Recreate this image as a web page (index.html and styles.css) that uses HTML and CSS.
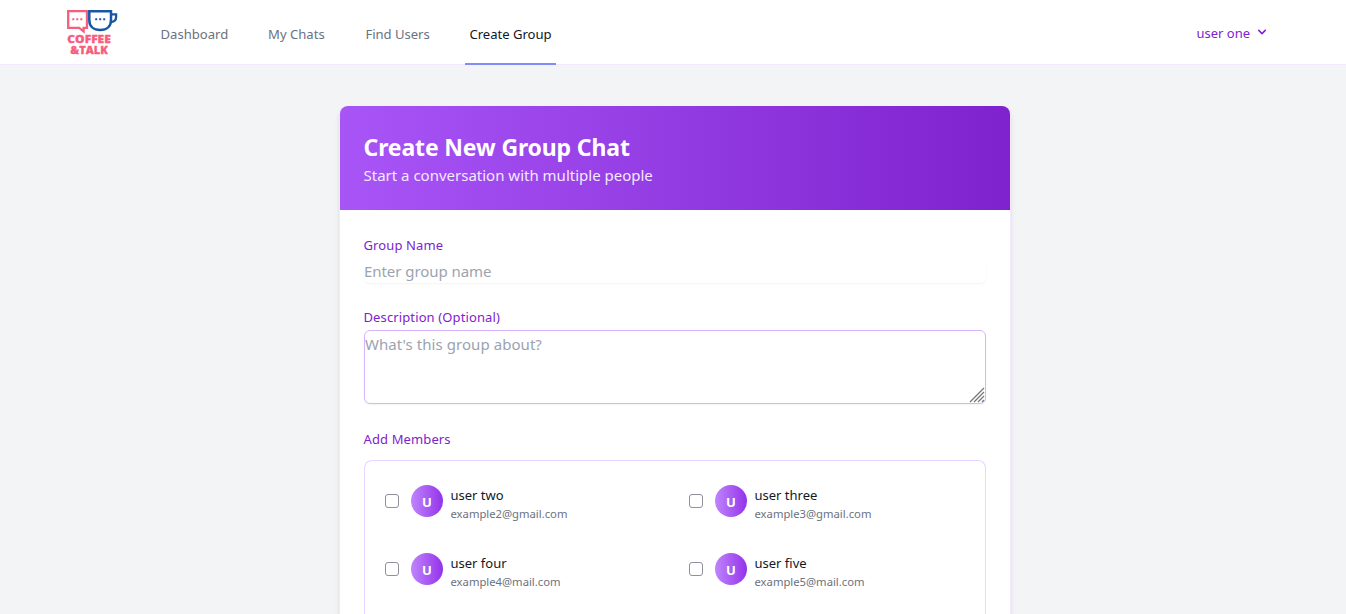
FILE: index.html
```
<!DOCTYPE html>
<html lang="en">
<head>
<meta charset="utf-8">
<title>Create Group</title>
<link rel="stylesheet" href="styles.css">
</head>
<body>
<nav class="nav">
  <a class="logo" href="#">
    <svg width="54" height="48" viewBox="0 0 54 48" fill="none">
      <path d="M3.2 4.2H22V20.8H18.6V24.3L14.2 20.8H3.2Z" stroke="#f75d7e" stroke-width="2.3"/>
      <path d="M7.3 12.2h2M11.3 12.2h2M15.3 12.2h2" stroke="#f75d7e" stroke-width="2"/>
      <path d="M24.3 4.2H46V13C46 19.5 41.8 23 35.2 23S24.3 19.5 24.3 13Z" stroke="#1757a6" stroke-width="2.5"/>
      <path d="M46 7.3H51.1V10C51.1 13 49 15 45.2 15.2" stroke="#1757a6" stroke-width="2.3"/>
      <path d="M30.2 12.2h2M34.2 12.2h2M38.2 12.2h2" stroke="#1757a6" stroke-width="2"/>
      <g class="logo-text" fill="#f75d7e">
        <text x="2.3" y="36.2" textLength="43.5" lengthAdjust="spacingAndGlyphs">COFFEE</text>
        <text x="5.3" y="47" textLength="37.5" lengthAdjust="spacingAndGlyphs">&amp;TALK</text>
      </g>
    </svg>
  </a>
  <div class="links">
    <a class="link link-dashboard" href="#">Dashboard</a>
    <a class="link link-chats" href="#">My Chats</a>
    <a class="link link-find" href="#">Find Users</a>
    <a class="link link-create active" href="#">Create Group</a>
  </div>
  <button class="account" type="button"><span class="account-name">user one</span>
    <svg width="16" height="16" viewBox="0 0 20 20" fill="#7e22ce"><path d="M5.293 7.293a1 1 0 011.414 0L10 10.586l3.293-3.293a1 1 0 111.414 1.414l-4 4a1 1 0 01-1.414 0l-4-4a1 1 0 010-1.414z"/></svg>
  </button>
</nav>
<main class="card">
  <header class="card-head">
    <h1 class="title">Create New Group Chat</h1>
    <p class="subtitle">Start a conversation with multiple people</p>
  </header>
  <form class="form">
    <label class="label label-name" for="name">Group Name</label>
    <input class="input" id="name" type="text" placeholder="Enter group name">
    <label class="label label-desc" for="desc">Description (Optional)</label>
    <div class="area-wrap">
      <textarea class="textarea" id="desc" placeholder="What's this group about?"></textarea>
      <svg class="grip" width="16" height="16" viewBox="0 0 16 16" stroke="#777" stroke-width="1.3"><path d="M1 15L15 1M5 15L15 5M9 15L15 9M13 15L15 13"/></svg>
    </div>
    <div class="label label-members">Add Members</div>
    <div class="members">
      <label class="member"><input class="check" type="checkbox"><span class="avatar">U</span><span class="who"><span class="name">user two</span><span class="mail">example2@gmail.com</span></span></label>
      <label class="member"><input class="check" type="checkbox"><span class="avatar">U</span><span class="who"><span class="name">user three</span><span class="mail">example3@gmail.com</span></span></label>
      <label class="member"><input class="check" type="checkbox"><span class="avatar">U</span><span class="who"><span class="name">user four</span><span class="mail">example4@mail.com</span></span></label>
      <label class="member"><input class="check" type="checkbox"><span class="avatar">U</span><span class="who"><span class="name">user five</span><span class="mail">example5@mail.com</span></span></label>
    </div>
  </form>
</main>
</body>
</html>
```
FILE: styles.css
```
* { box-sizing: border-box; }
html, body { height: 100%; }
body {
  margin: 0;
  display: flex;
  flex-direction: column;
  overflow: hidden;
  background: #f3f4f6;
  font-family: "Noto Sans", "Open Sans", sans-serif;
  color: #111827;
}
.nav {
  flex: none;
  height: 65px;
  display: flex;
  align-items: stretch;
  padding: 0 76px 0 65px;
  background: #fff;
  border-bottom: 1px solid #f3e8ff;
}
.logo { width: 54px; padding-top: 7px; }
.logo svg { display: block; overflow: visible; }
.logo-text { font: 800 10.5px/1 "Open Sans", "Noto Sans", sans-serif; stroke: #f75d7e; stroke-width: .3px; }
.links { display: flex; gap: 32px; margin-left: 37.5px; height: 65px; }
.link {
  padding: 0 4px;
  line-height: 68px;
  font-size: 13.1px;
  white-space: nowrap;
  color: #6b7280;
  text-decoration: none;
}
.link-dashboard { width: 75.5px; }
.link-chats { width: 65.5px; }
.link-find { width: 71.5px; letter-spacing: -0.05px; }
.link-create { width: 91px; padding-left: 4.5px; letter-spacing: -0.03px; }
.active { color: #111827; border-bottom: 2px solid #818cf8; }
.account {
  display: flex;
  align-items: center;
  gap: 4px;
  height: 64px;
  margin-left: auto;
  padding: 0;
  border: 0;
  background: none;
  font: 13px "Noto Sans", sans-serif;
  color: #7e22ce;
}
.account-name { padding-top: 2px; }
.card {
  flex: 1;
  min-height: 0;
  display: flex;
  flex-direction: column;
  width: 672px;
  margin: 41px 0 0 339px;
  background: #fff;
  background-clip: padding-box;
  border: 1px solid #f3e8ff;
  border-width: 0 1px;
  border-radius: 8px 8px 0 0;
  box-shadow: 0 4px 6px -1px rgba(0,0,0,.1), 0 2px 4px -2px rgba(0,0,0,.1);
}
.card-head {
  flex: none;
  height: 104px;
  padding: 24px 23.5px;
  border-radius: 8px 8px 0 0;
  background: linear-gradient(to right, #a855f7, #7e22ce);
}
.title { margin: 0; font-size: 23px; line-height: 34px; letter-spacing: -0.14px; color: #fff; font-weight: 700; white-space: nowrap; }
.subtitle { margin: 0; font-size: 15px; line-height: 23px; color: #f3e8ff; white-space: nowrap; }
.form { flex: 1; min-height: 0; display: flex; flex-direction: column; padding: 25px 24px 0; }
.label { flex: none; margin-left: -0.5px; font-size: 13px; line-height: 20px; letter-spacing: 0.12px; color: #7e22ce; }
.input, .textarea {
  display: block;
  flex: none;
  width: 622px;
  margin: 0;
  padding: 0;
  border: 0;
  border-radius: 6px;
  background: #fff;
  box-shadow: 0 1px 2px rgba(0,0,0,.05);
  font: 15px/24px "Noto Sans", sans-serif;
  outline: 0;
}
.input { height: 24px; margin-top: 4px; letter-spacing: -0.06px; padding-bottom: 1px; }
.input::placeholder, .textarea::placeholder { color: #9ca3af; opacity: 1; }
.label-desc { margin-top: 24px; }
.area-wrap { position: relative; flex: none; margin-top: 3px; }
.textarea { height: 74px; padding-top: 1px; border: 1px solid #d8b4fe; resize: none; letter-spacing: 0.06px; }
.grip { position: absolute; right: 1px; bottom: 1px; }
.label-members { margin-top: 25px; }
.members {
  flex: 1;
  min-height: 0;
  display: grid;
  grid-template-columns: 304px 280px;
  grid-auto-rows: 68px;
  margin-top: 11px;
  padding: 6px 16px 0;
  border: 1px solid #e9d5ff;
  border-bottom: 0;
  border-radius: 8px 8px 0 0;
}
.member { display: flex; align-items: center; padding-left: 4px; }
.check {
  appearance: none;
  flex: none;
  width: 14px;
  height: 14px;
  margin: 0 12px 0 0;
  border: 1px solid #8f8f9d;
  border-radius: 3px;
  background: #fff;
}
.avatar {
  flex: none;
  width: 32px;
  height: 32px;
  border-radius: 50%;
  background: linear-gradient(to right, #c084fc, #9333ea);
  color: #fff;
  font-size: 13px;
  font-weight: 700;
  line-height: 34px;
  text-align: center;
}
.who { margin-left: 7.5px; display: flex; flex-direction: column; padding-top: 5px; }
.name { font-size: 13px; line-height: 20px; }
.mail { font-size: 11.25px; line-height: 17px; color: #6b7280; }
```
